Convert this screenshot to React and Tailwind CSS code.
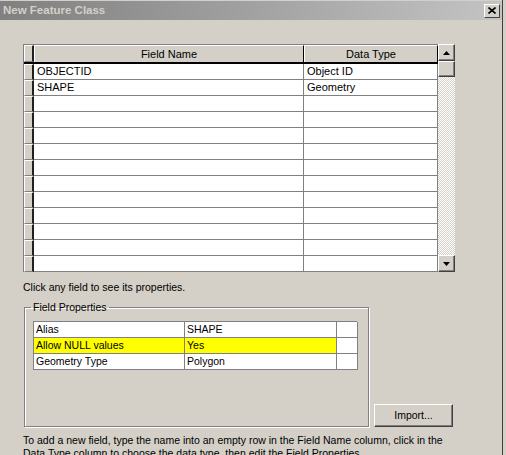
import React from "react";

const font = { fontFamily: '"Liberation Sans", Arial, sans-serif' };

function Selector() {
  return (
    <div className="w-[10px] shrink-0 bg-[#d4d0c8] border-t border-l border-t-white border-l-white border-r-2 border-b border-r-[#202020] border-b-[#808080]" />
  );
}

function DataRow({ name, type }) {
  return (
    <div className="flex h-[16px] shrink-0">
      <Selector />
      <div className="w-[270px] shrink-0 bg-white border-r border-b border-[#808080] pl-[3px] text-[11px] leading-[15px] text-black">
        {name}
      </div>
      <div className="w-[134px] shrink-0 bg-white border-r border-b border-[#808080] pl-[3px] text-[11px] leading-[15px] text-black">
        {type}
      </div>
    </div>
  );
}

function ScrollBtn({ up }) {
  return (
    <div className="w-[17px] h-[17px] shrink-0 bg-[#d4d0c8] border border-t-white border-l-white border-r-[#404040] border-b-[#404040] flex items-center justify-center shadow-[inset_-1px_-1px_0_#808080]">
      <svg width="7" height="4" viewBox="0 0 7 4">
        {up ? (
          <polygon points="3.5,0 7,4 0,4" fill="#000" />
        ) : (
          <polygon points="0,0 7,0 3.5,4" fill="#000" />
        )}
      </svg>
    </div>
  );
}

function PropRow({ label, value, hl }) {
  return (
    <div className="flex h-[16px]">
      <div
        className={`w-[151px] shrink-0 border-r border-b border-[#808080] pl-[2px] text-[10.5px] leading-[15px] text-black ${
          hl ? "bg-[#ffff00]" : "bg-white"
        }`}
      >
        {label}
      </div>
      <div
        className={`w-[152px] shrink-0 border-r border-b border-[#808080] pl-[2px] text-[10.5px] leading-[15px] text-black ${
          hl ? "bg-[#ffff00]" : "bg-white"
        }`}
      >
        {value}
      </div>
      <div className="w-[21px] shrink-0 bg-white border-r border-b border-[#808080]" />
    </div>
  );
}

export default function App() {
  const rows = [
    ["OBJECTID", "Object ID"],
    ["SHAPE", "Geometry"],
    ...Array.from({ length: 11 }, () => ["", ""]),
  ];
  return (
    <div className="w-[506px] h-[455px] overflow-hidden flex bg-[#d4d0c8]" style={font}>
      <div className="w-[502px] shrink-0 flex flex-col">
        {/* Title bar */}
        <div className="h-[20px] shrink-0 flex items-center justify-between bg-gradient-to-r from-[#808080] to-[#c4c4c4] pl-[3px] pr-[2px] border-t border-t-[#d4d0c8]">
          <span className="text-[11.5px] font-bold text-[#d4d0c8] leading-none">New Feature Class</span>
          <div className="w-[16px] h-[14px] bg-[#d4d0c8] border border-t-white border-l-white border-r-[#404040] border-b-[#404040] flex items-center justify-center">
            <svg width="8" height="7" viewBox="0 0 8 7">
              <path d="M0.5 0.5 L7.5 6.5 M7.5 0.5 L0.5 6.5" stroke="#000" strokeWidth="1.6" />
            </svg>
          </div>
        </div>

        {/* Grid */}
        <div className="mt-[24px] ml-[23px] flex shrink-0">
          <div className="border-l border-t border-[#808080] w-[415px]">
            <div className="flex h-[19px] border-b-2 border-black">
              <Selector />
              <div className="w-[270px] shrink-0 bg-[#d4d0c8] border-t border-l border-white border-r border-r-black text-center text-[11px] leading-[16px] text-black">
                Field Name
              </div>
              <div className="w-[134px] shrink-0 bg-[#d4d0c8] border-t border-l border-white border-r border-r-black text-center text-[11px] leading-[16px] text-black">
                Data Type
              </div>
            </div>
            {rows.map((r, i) => (
              <DataRow key={i} name={r[0]} type={r[1]} />
            ))}
          </div>
          <div className="w-[17px] h-[228px] flex flex-col">
            <ScrollBtn up />
            <div className="w-[17px] h-[16px] shrink-0 bg-[#d4d0c8] border border-t-white border-l-white border-r-[#404040] border-b-[#404040] shadow-[inset_-1px_-1px_0_#808080]" />
            <div className="flex-1 bg-[image:repeating-conic-gradient(#ffffff_0_25%,#d4d0c8_0_50%)] bg-[length:2px_2px]" />
            <ScrollBtn />
          </div>
        </div>

        <div className="ml-[23px] mt-[9px] shrink-0 text-[10.5px] leading-[13px] text-black">
          Click any field to see its properties.
        </div>

        <div className="flex items-end mt-[7px] shrink-0">
          <fieldset className="ml-[24px] w-[345px] h-[126px] border border-[#808080] shadow-[inset_1px_1px_0_#fff,1px_1px_0_#fff] p-0 m-0">
            <legend className="ml-[6px] px-[2px] text-[10.5px] leading-[13px] text-black">Field Properties</legend>
            <div className="ml-[8px] mt-[7px] w-[324px] border-l border-t border-[#808080]">
              <PropRow label="Alias" value="SHAPE" />
              <PropRow label="Allow NULL values" value="Yes" hl />
              <PropRow label="Geometry Type" value="Polygon" />
            </div>
          </fieldset>
          <button className="ml-[5px] w-[79px] h-[23px] bg-[#d4d0c8] border border-t-white border-l-white border-r-[#404040] border-b-[#404040] shadow-[inset_-1px_-1px_0_#808080] text-[10.5px] text-black leading-none">
            Import...
          </button>
        </div>

        <div className="ml-[23px] mt-[7px] shrink-0 whitespace-nowrap text-[10.5px] leading-[13px] text-black">
          To add a new field, type the name into an empty row in the Field Name column, click in the
          <br />
          Data Type column to choose the data type, then edit the Field Properties.
        </div>
      </div>
      <div className="w-[1px] h-full bg-[#404040]" />
      <div className="w-[3px] h-full bg-[#d4d0c8]" />
    </div>
  );
}
